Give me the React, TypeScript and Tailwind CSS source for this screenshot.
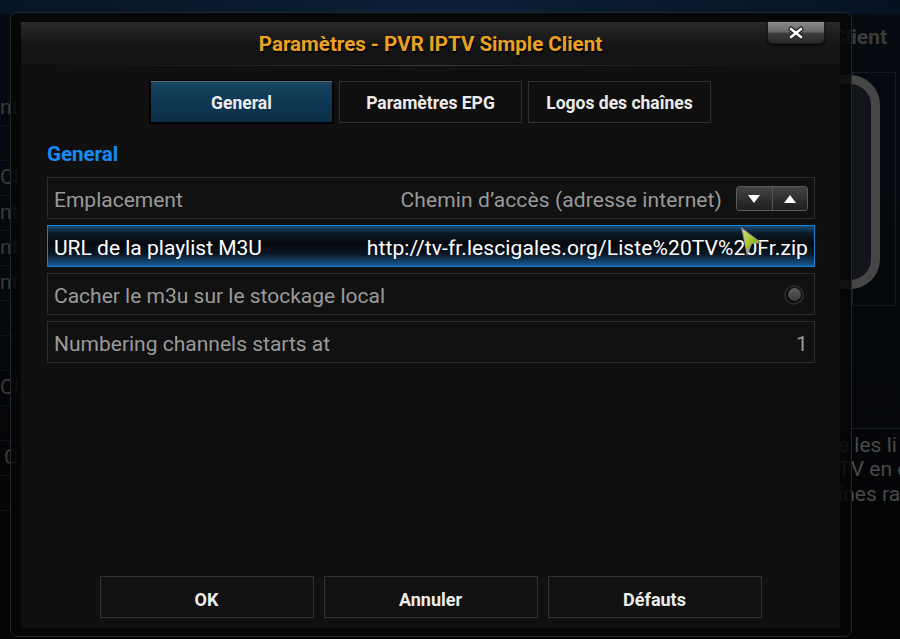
import type { ReactNode } from 'react';

const leftRows = ['nt', '', 'Cli', 'nt', 'nt', 'nt', '', '', 'Cli', '', 'C', '', ''];

function Background() {
  return (
    <div className="flex h-full w-full flex-col">
      <div className="h-[14px] w-full bg-gradient-to-r from-[#071424] via-[#0c2038] to-[#061222]" />
      <div className="flex flex-1 bg-gradient-to-b from-[#060b12] to-[#030405]">
        <div className="flex w-[40px] flex-col pt-[76px]">
          {leftRows.map((text, i) => (
            <div
              key={i}
              className={`flex h-[35px] items-center whitespace-nowrap text-[21px] text-[#3a3a3a] ${i > 0 ? 'border-t border-[#0e141c]' : ''}`}
            >
              <span className={text === 'C' ? 'ml-[4px]' : ''}>{text}</span>
            </div>
          ))}
        </div>
        <div className="flex-1" />
        <div className="flex w-[62px] flex-col overflow-hidden">
          <div className="-ml-[6px] mt-[8px] whitespace-nowrap text-[21px] font-bold text-[#3b3b3b]">Client</div>
          <div className="ml-[14px] mt-[18px] h-[234px] w-[44px] border border-[#141b26] pt-[2px]">
            <div className="-ml-[48px] h-[214px] w-[75px] rounded-[30px] border-[9px] border-[#464646] bg-[#111418]" />
          </div>
          <div className="mt-[122px] border-t border-[#161a20] pt-[4px] text-[21px] leading-[24.5px] text-[#4a4a4a]">
            <div className="whitespace-nowrap">e les li</div>
            <div className="whitespace-nowrap">TV en c</div>
            <div className="whitespace-nowrap">înes ra</div>
          </div>
        </div>
      </div>
    </div>
  );
}

function Tab({ label, active }: { label: string; active?: boolean }) {
  return (
    <div
      className={
        active
          ? 'flex h-[42px] w-[183px] items-center justify-center border border-[#050505] border-t-[#5a6a76] bg-gradient-to-b from-[#17445f] via-[#0f3753] to-[#0c2e47] pt-[3px] text-[17.5px] font-bold text-[#ececec] shadow-[0_0_0_1px_#000]'
          : 'flex h-[42px] w-[183px] items-center justify-center border border-[#303030] bg-[#0f0f0f] pt-[3px] text-[17.5px] font-bold text-[#ececec]'
      }
    >
      {label}
    </div>
  );
}

function Spinner() {
  return (
    <div className="flex h-[25px] w-[72px] overflow-hidden rounded-[3px] border border-[#5a5a5a] bg-[#1a1a1a]">
      <div className="flex flex-1 items-center justify-center border-r border-[#555] bg-gradient-to-b from-[#444] to-[#1e1e1e]">
        <svg width="14" height="10" viewBox="0 0 14 10">
          <polygon points="1,1 13,1 7,9" fill="#fff" />
        </svg>
      </div>
      <div className="flex flex-1 items-center justify-center bg-gradient-to-b from-[#444] to-[#1e1e1e]">
        <svg width="14" height="10" viewBox="0 0 14 10">
          <polygon points="1,9 13,9 7,1" fill="#fff" />
        </svg>
      </div>
    </div>
  );
}

function Radio() {
  return (
    <div className="flex h-[20px] w-[20px] items-center justify-center rounded-full bg-[#0a0a0a] shadow-[inset_0_0_0_2px_#2a2a2a]">
      <div className="h-[13px] w-[13px] rounded-full bg-gradient-to-b from-[#5e5e5e] to-[#3a3a3a]" />
    </div>
  );
}

function Row({
  label,
  value,
  focused,
  right,
}: {
  label: string;
  value?: string;
  focused?: boolean;
  right?: ReactNode;
}) {
  return (
    <div
      className={
        focused
          ? 'flex h-[42px] items-center border border-[#1b7fd0] bg-[linear-gradient(180deg,#1a4f78_0%,#0b1a28_18%,#06090d_45%,#0a1624_70%,#165c98_100%)] px-[6px] pt-[5px] text-[21px] text-white'
          : 'flex h-[42px] items-center border border-[#2c2c2c] bg-[#111111] px-[6px] pt-[5px] text-[21px] text-[#9a9a9a]'
      }
    >
      <span className="whitespace-nowrap">{label}</span>
      <div className="flex-1" />
      {value && <span className="whitespace-nowrap tracking-[0.1px]">{value}</span>}
      {right}
    </div>
  );
}

function DialogButton({ label }: { label: string }) {
  return (
    <div className="flex h-[42px] w-[214px] items-center justify-center border border-[#333] bg-[#111111] pt-[4px] text-[18px] font-bold text-[#ececec]">
      {label}
    </div>
  );
}

function Cursor() {
  return (
    <svg width="24" height="32" viewBox="0 0 24 32">
      <defs>
        <linearGradient id="cg" x1="0" y1="0" x2="1" y2="1">
          <stop offset="0" stopColor="#d8e86a" />
          <stop offset="0.6" stopColor="#9cb818" />
          <stop offset="1" stopColor="#6f8a08" />
        </linearGradient>
      </defs>
      <polygon points="1,1 22,17 12,18 7,30" fill="#9a9a9a" />
      <polygon points="3,4 20,16.5 11,17 7,26" fill="url(#cg)" />
    </svg>
  );
}

export default function App() {
  return (
    <div className="relative h-[639px] w-[900px] overflow-hidden bg-black font-['Roboto','Liberation_Sans',sans-serif]">
      <Background />

      {/* settings dialog */}
      <div className="absolute left-[10px] top-[12px] h-[625px] w-[842px] rounded-[7px] border border-[#262626] bg-[rgba(6,6,6,0.82)] pb-[8px] pl-[10px] pr-[11px] pt-[9px]">
        <div className="flex h-full flex-col bg-[#101010]">
          <div className="flex h-[43px] items-center justify-center bg-gradient-to-b from-[#2a2a2a] via-[#151515] to-[#121212] pt-[2px]">
            <span className="text-[20.5px] font-bold text-[#eba222] [text-shadow:1px_2px_0_#000]">
              Paramètres - PVR IPTV Simple Client
            </span>
          </div>
          <div className="mx-[24px] h-px bg-gradient-to-r from-transparent via-[#363636] to-transparent" />

          <div className="mt-[15px] flex justify-center gap-[6px]">
            <Tab label="General" active />
            <Tab label="Paramètres EPG" />
            <Tab label="Logos des chaînes" />
          </div>

          <div className="mt-[19px] px-[26px] text-[20.5px] font-bold leading-[24px] text-[#168cf2]">General</div>

          <div className="mt-[11px] flex flex-col gap-[6px] pl-[26px] pr-[25px]">
            <Row
              label="Emplacement"
              value="Chemin d’accès (adresse internet)"
              right={
                <div className="ml-[14px] -mt-[4px]">
                  <Spinner />
                </div>
              }
            />
            <div className="relative">
              <Row label="URL de la playlist M3U" value="http://tv-fr.lescigales.org/Liste%20TV%20Fr.zip" focused />
              <div className="absolute left-[693px] top-[1px]">
                <Cursor />
              </div>
            </div>
            <Row
              label="Cacher le m3u sur le stockage local"
              right={
                <div className="-mt-[4px] mr-[4px]">
                  <Radio />
                </div>
              }
            />
            <Row label="Numbering channels starts at" value="1" />
          </div>

          <div className="mt-auto flex justify-center gap-[10px] pb-[10px]">
            <DialogButton label="OK" />
            <DialogButton label="Annuler" />
            <DialogButton label="Défauts" />
          </div>
        </div>

        {/* close button */}
        <div className="absolute left-[756px] top-[8px] flex h-[23px] w-[58px] items-center justify-center rounded-b-[6px] border border-[#1a1a1a] bg-[linear-gradient(180deg,#8c8c8c_0%,#6a6a6a_45%,#3c3c3c_55%,#2a2a2a_100%)] shadow-[0_1px_2px_#000]">
          <svg width="18" height="14" viewBox="0 0 18 14">
            <path d="M4 3 L14 11 M14 3 L4 11" stroke="#222" strokeWidth="5" strokeLinecap="round" />
            <path d="M4 3 L14 11 M14 3 L4 11" stroke="#fff" strokeWidth="2.6" strokeLinecap="round" />
          </svg>
        </div>
      </div>
    </div>
  );
}
